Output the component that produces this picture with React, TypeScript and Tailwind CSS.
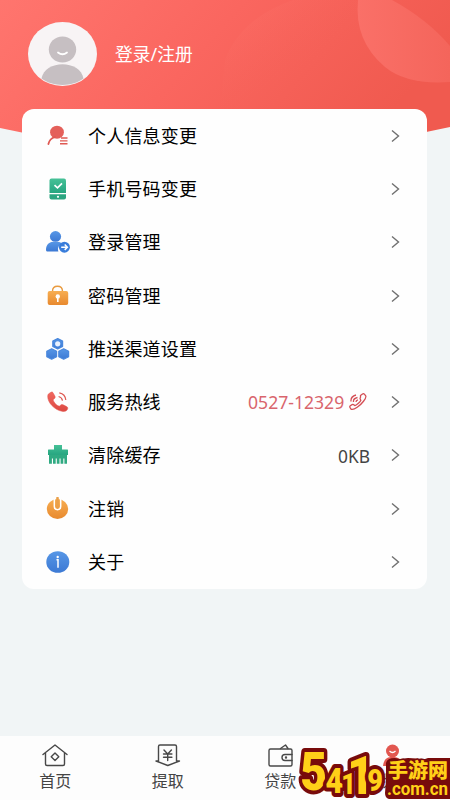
import React from 'react';

const sans = "font-['Noto_Sans','Noto_Sans_CJK_SC',sans-serif]";

const Chevron = () => (
  <svg width="10" height="14" viewBox="0 0 10 14" fill="none" stroke="#707070" strokeWidth="1.4">
    <path d="M1 1.500 7.500 7 1 12.500" />
  </svg>
);

const Defs = () => (
  <svg width="0" height="0" className="absolute">
    <defs>
      <linearGradient id="b" x2="0" y2="1"><stop stopColor="#5797e6" /><stop offset="1" stopColor="#3c79d4" /></linearGradient>
      <linearGradient id="o" x2="0" y2="1"><stop stopColor="#f7ae52" /><stop offset="1" stopColor="#e8892e" /></linearGradient>
      <linearGradient id="g" x2="0" y2="1"><stop stopColor="#46c197" /><stop offset="1" stopColor="#26a580" /></linearGradient>
      <linearGradient id="r" x2="0" y2="1"><stop stopColor="#f0685f" /><stop offset="1" stopColor="#dc4942" /></linearGradient>
    </defs>
  </svg>
);

const hex = (x: number, y: number) => (
  <path d={`M${x} ${y - 5.2}l4.9 2.5v5.4L${x} ${y + 5.2}l-4.9-2.500v-5.400z`} fill="url(#b)" stroke="#4a88dd" strokeWidth="1.2" strokeLinejoin="round" />
);

const icons = [
  <><ellipse cx="11" cy="8.200" rx="6.900" ry="6.500" fill="#e4605a" /><path d="M9 13C5.500 14 3.200 16.400 2.400 20" stroke="#df5952" strokeWidth="1.800" fill="none" strokeLinecap="round" /><path d="M15 14h6.500M14 16.900h7.500M14 19.800h7.500" stroke="#df5952" strokeWidth="1.400" /></>,
  <><path d="M3.500 3.500q0-2 2-2h12.500q2 0 2 2V16h-16.500z" fill="url(#g)" /><path d="M3.500 17.200h16.500V20.500q0 2-2 2h-12.500q-2 0-2-2z" fill="#2ba580" /><path d="m8.500 8.200 3 2.700 4.500-4.500" stroke="#fff" strokeWidth="1.700" fill="none" /><circle cx="12" cy="19.800" r="1.100" fill="#fff" /></>,
  <><ellipse cx="9.500" cy="6.400" rx="5.600" ry="5.300" fill="url(#b)" /><path d="M0 19.800c.1-4.600 2.800-7.800 7-8h4.500c2.300.1 4 1.100 5 2.600-4 .4-5.200 3.300-4.100 7H1q-1 0-1-1.600z" fill="url(#b)" /><circle cx="18.400" cy="17.200" r="5.500" fill="#397ddb" /><path d="M15.200 17.200h6M18.700 14.500l2.700 2.700-2.700 2.700" stroke="#fff" strokeWidth="1.500" fill="none" /></>,
  <><path d="M6.500 8.500V7.200c0-3 2-5 5-5s5 2 5 5v1.300" fill="none" stroke="#e99b40" strokeWidth="1.400" /><rect x="1.700" y="7" width="20.500" height="14" rx="2" fill="url(#o)" /><circle cx="11.800" cy="12.400" r="2.200" fill="#fff" /><path d="M11.800 13v5" stroke="#fff" strokeWidth="1.600" /></>,
  <>{hex(11.7, 6.8)}{hex(5.7, 17)}{hex(17.7, 17)}<circle cx="11.700" cy="6.800" r="2.600" fill="#e9f1ff" /></>,
  <><path d="M3 3.500 5 2.200c1.200-.6 1.900.1 2.300 1L9 6.300c.5 1.100 0 2-1.100 2.700-1 .7-.8 1.300.2 3 1.600 2.200 3 3.500 4.800 4.100.8.300 1.300-.8 2.200-1.300.9-.6 1.700-.3 2.600.2l2.900 1.600c1.300.8 1.400 1.500.9 2.700-1 2-3 2.500-5.500 2C8.500 20 1.500 12.500 1.700 6.300 1.800 5 2 4.200 3 3.500z" fill="url(#r)" stroke="#e3554e" strokeWidth=".5" /><path d="M12.600 6.500c2.400.6 3.600 2 3.900 4.200M13.300 2.800c4 .8 6.200 3.300 6.500 7.200" stroke="#df5952" strokeWidth="1.200" fill="none" /></>,
  <><path d="M8 2h8v4.500h5.500q.5 0 .5.500v5H2V7q0-.5.500-.5H8z" fill="url(#g)" /><path d="M3 11.800h18v9h-2.600v-5.300h-1.100v5.300h-2.700v-5.300h-1.100v5.300h-2.700v-5.300H9.700v5.300H7v-5.300H5.900v5.300H3z" fill="#30aa82" /></>,
  <><ellipse cx="11.500" cy="12" rx="10.700" ry="10" fill="url(#o)" /><path d="M8.300 2v7.500c0 4.300 6.400 4.300 6.400 0V2" stroke="#fff" strokeWidth="1.500" fill="none" /><path d="M11.500 1v9" stroke="#eaa04a" strokeWidth="2.600" strokeLinecap="round" /></>,
  <><ellipse cx="11.800" cy="12" rx="11.500" ry="10.800" fill="url(#b)" /><path d="M10.500 9.700h1.500v8" stroke="#fff" strokeWidth="1.500" fill="none" /><circle cx="11.700" cy="7" r="1.200" fill="#fff" /></>,
];

const labels = ['个人信息变更', '手机号码变更', '登录管理', '密码管理', '推送渠道设置', '服务热线', '清除缓存', '注销', '关于'];

const Outline = ({ children }: { children: React.ReactNode }) => (
  <svg width="26" height="24" viewBox="0 0 26 24" fill="none" stroke="#484848" strokeWidth="1.4" strokeLinejoin="round" strokeLinecap="round">{children}</svg>
);

const tabs = [
  { label: '首页', icon: <Outline><path d="M1 11.500 13 2l12 9.500M3.500 10v11q0 1.500 1.500 1.500h16q1.500 0 1.500-1.500V10" /><path d="m13 10 3.800 3.700L13 17.400l-3.800-3.700z" /></Outline> },
  { label: '提取', icon: <Outline><path d="M3.500 18V3.500Q3.500 2 5 2h15q1.500 0 1.500 1.500V18M3.500 18H1l11.800 4.500L24.500 18h-3M9 7l3.700 4L16.400 7M12.700 11v6.500M8.500 11h8.400M8.500 14.200h8.400" /></Outline> },
  { label: '贷款', icon: <Outline><rect x="2" y="6" width="23" height="17" rx="1.500" /><path d="M13.500 5.500 18.500 2l2.500 3.500M25 11.500h-7q-3 0-3 3t3 3h7" /><circle cx="19" cy="14.500" r=".5" fill="#444" /></Outline> },
  { label: '我的', icon: <svg width="26" height="24" viewBox="0 0 26 24"><circle cx="12.500" cy="8" r="6.500" fill="#e25750" /><path d="M3 23c1-8 5-9 9.500-9s9 1 10 9z" fill="#e25750" /><path d="M9.500 8q3 3 6 0" stroke="#fff" strokeWidth="1.200" fill="none" /></svg> },
];

const Watermark = () => (
  <svg className="absolute bottom-0 right-0" width="156" height="60" viewBox="294 740 156 60">
    <path d="M386 763q1-5 9-5l5 1 8-1 17 1 3-1h22v41h-61q-4-1-4-6l1-13z" fill="#780b0b" />
    <g fill="#ffd018" stroke="#780b0b" strokeLinejoin="round" paintOrder="stroke">
      <text transform="translate(302 790) scale(.87 1)" fontFamily="Roboto, sans-serif" fontWeight="900" strokeWidth="8">
        <tspan x="-2" y="0" fontSize="53">5</tspan>
        <tspan x="27" y="3" fontSize="35">4</tspan>
        <tspan x="45" y="4" fontSize="29">1</tspan>
        <tspan x="52" y="4" fontSize="53">1</tspan>
        <tspan x="75" y="1" fontSize="31">9</tspan>
      </text>
      <text x="388" y="778" fontSize="20" fontWeight="900" strokeWidth="3" textLength="60" lengthAdjust="spacingAndGlyphs" fontFamily="Noto Sans CJK SC, sans-serif">手游网</text>
      <text x="387" y="795" fontSize="19" fontWeight="700" strokeWidth="3" textLength="61" lengthAdjust="spacingAndGlyphs" fontFamily="Roboto, sans-serif">.com.cn</text>
    </g>
  </svg>
);

export default function App() {
  return (
    <div className={`relative flex h-[800px] w-[450px] flex-col overflow-hidden bg-[#f1f5f6] ${sans}`}>
      <Defs />
      <svg className="absolute left-0 top-0" width="450" height="140" viewBox="0 0 450 140">
        <defs>
          <linearGradient id="hero" x1="0" y1="0" x2="1" y2=".3"><stop stopColor="#ff756e" /><stop offset=".5" stopColor="#fa665f" /><stop offset="1" stopColor="#f05a4f" /></linearGradient>
          <linearGradient id="glow" x1="0" y1="0" x2="1" y2="1"><stop stopColor="#ff8178" stopOpacity=".25" /><stop offset=".6" stopColor="#f66257" stopOpacity="0" /></linearGradient>
          <linearGradient id="orb" x1="0" x2="1"><stop stopColor="#fa7068" /><stop offset="1" stopColor="#f4655b" /></linearGradient>
        </defs>
        <path d="M0 0h450v127Q225 178 0 128z" fill="url(#hero)" />
        <path d="M225 60Q241 18 293 0h85v110H220z" fill="url(#glow)" />
        <path d="M358 0q-4 41 27 67 22 18 65 15V46Q427 19 392 0z" fill="url(#orb)" />
      </svg>
      <header className="relative flex h-[109px] items-center gap-[17px] pl-7">
        <svg width="70" height="66" viewBox="0 0 70 66">
          <ellipse cx="34.500" cy="32" rx="34.500" ry="32" fill="#f8f4f5" />
          <ellipse cx="34.500" cy="27.500" rx="13.700" ry="13" fill="#c6bfc2" />
          <path d="M13.500 56.500C17 37.500 52 37.500 55.500 56.500 44 65 25 65 13.500 56.500z" fill="#c6bfc2" />
          <path d="M30 30.500q4.500 3.500 9 0" stroke="#fff" strokeWidth="1.800" fill="none" strokeLinecap="round" />
        </svg>
        <span className="text-[17.8px] text-white">登录/注册</span>
      </header>
      <main className="relative ml-[22px] mr-[23px] h-[480px] rounded-xl bg-[#fefefe]">
        {labels.map((label, i) => (
          <div key={label} className="flex h-[53.3px] items-center pl-6 pr-[26px]">
            <svg width="24" height="24" viewBox="0 0 24 24">{icons[i]}</svg>
            <span className="ml-[18px] pt-px text-[18px] tracking-[0.2px] text-black">{label}</span>
            <div className="ml-auto flex items-center">
              {i === 5 && (
                <div className="mr-6 flex items-center gap-[3px] text-[#d9656d]">
                  <span className="w-[98px] whitespace-nowrap pt-px text-[17.6px]">0527-12329</span>
                  <svg width="18" height="18" viewBox="0 0 18 18" fill="none" stroke="#d44e55" strokeWidth="1.3"><path d="m11.500 2.500 2-1.500q1-.7 1.900.2l1.300 1.600c1.200 2-4.200 8.700-8.500 11.500-2.500 1.700-5 2.800-6.300 1.700L1 14.500q-.6-1 .3-1.800l1.800-1.100q1-.5 2 .3l.8.7c1.400-.2 5.200-3.600 5.900-5.200l-.5-1.300q-.6-.9.200-1.700zM2 8.500Q1.500 3.500 7 2M4.500 9Q4 5.500 8.500 4.500M7 9q0-1.800 2-2.200" /></svg>
                </div>
              )}
              {i === 6 && <span className="mr-[21px] pt-px text-[17.400px] text-[#444]">0KB</span>}
              <Chevron />
            </div>
          </div>
        ))}
      </main>
      <nav className="relative mt-auto grid h-16 grid-cols-4 bg-[#fdfdfd]">
        {tabs.map(tab => (
          <div key={tab.label} className="flex flex-col items-center pr-0.5 pt-[7px] text-[#444]">
            {tab.icon}
            <span className="mt-[3px] text-[16px] leading-[23px]">{tab.label}</span>
          </div>
        ))}
        <Watermark />
      </nav>
    </div>
  );
}
